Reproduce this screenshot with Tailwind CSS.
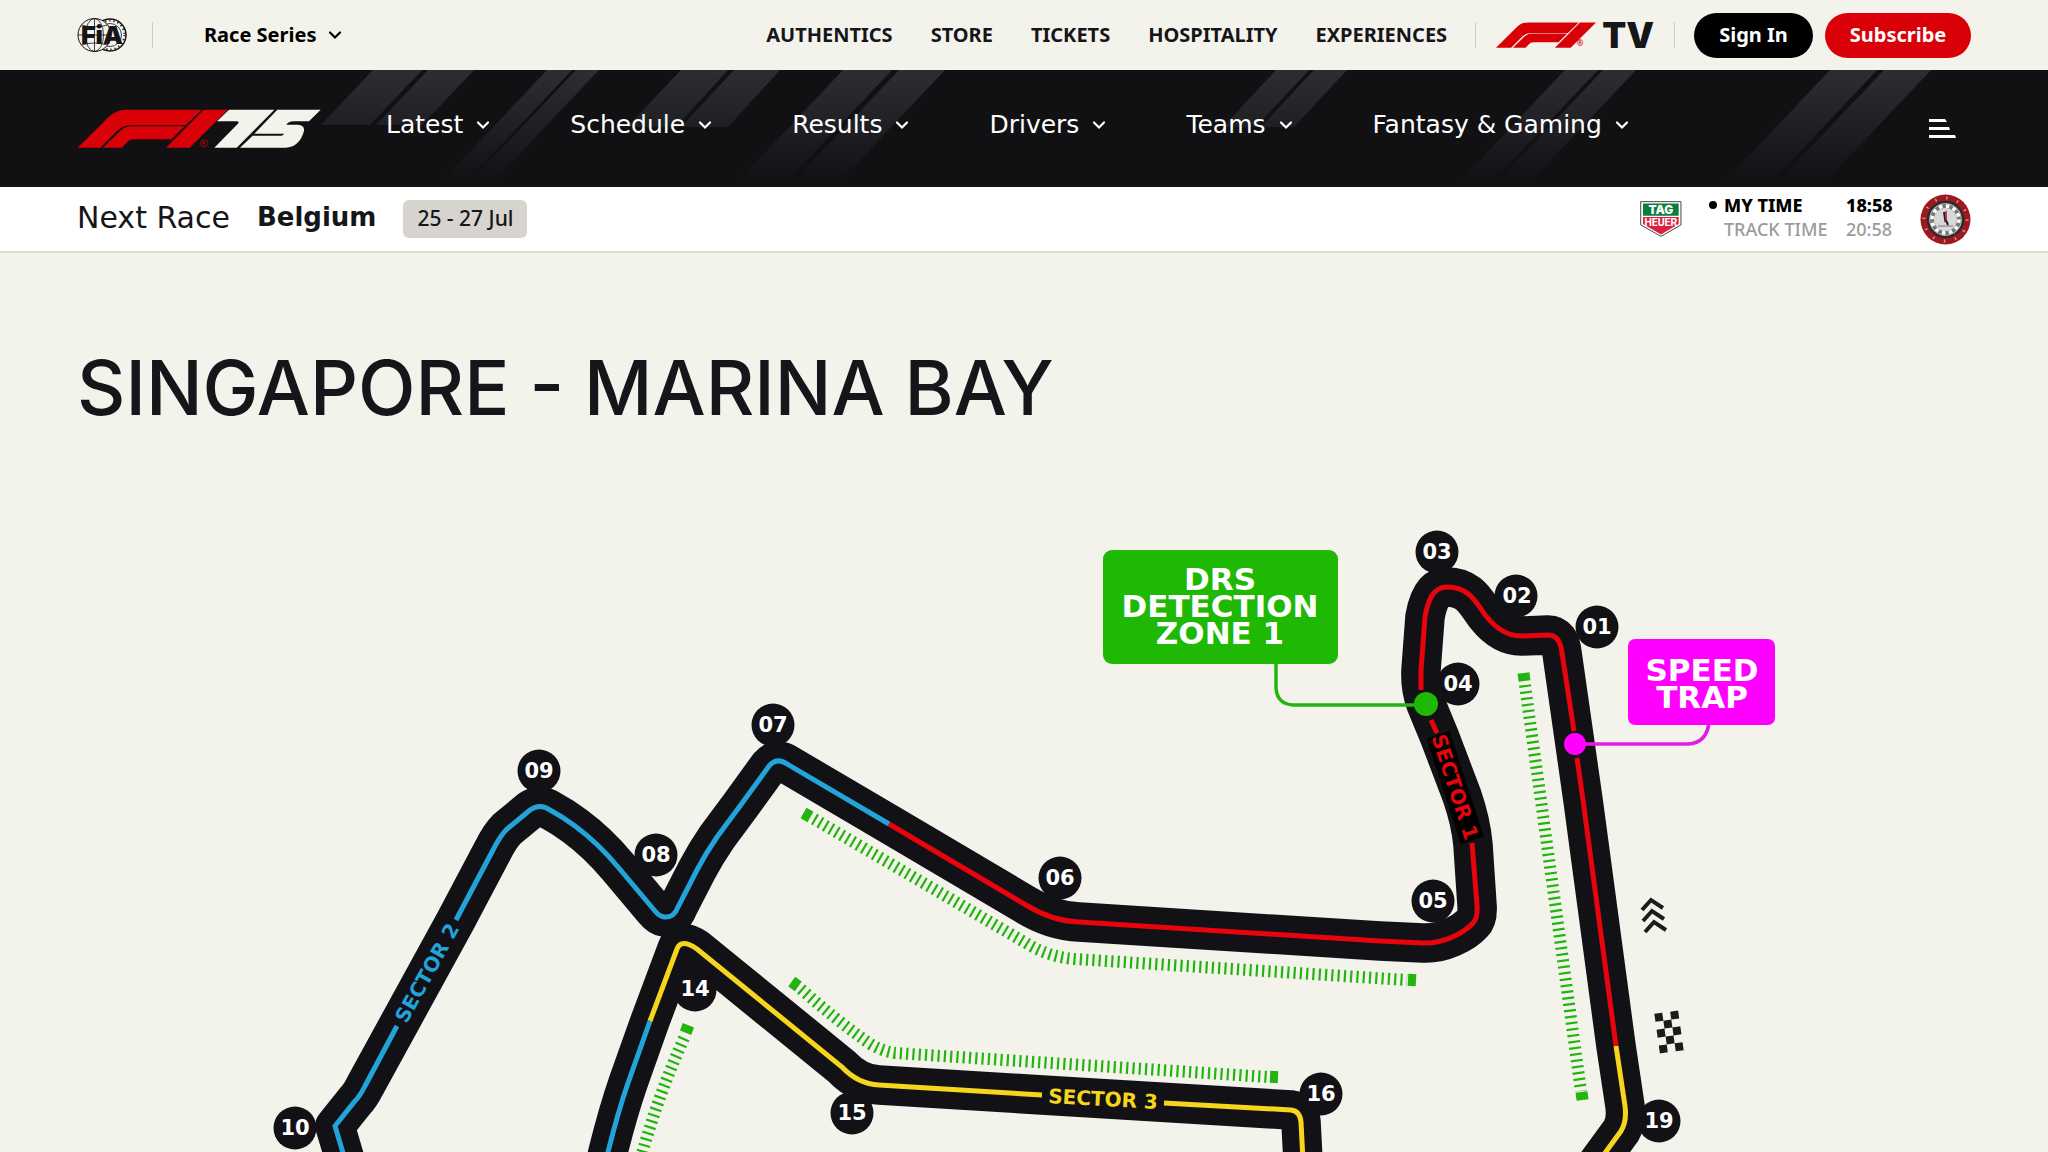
<!DOCTYPE html>
<html lang="en">
<head>
<meta charset="utf-8">
<title>Singapore - Marina Bay</title>
<script src="https://cdn.jsdelivr.net/npm/@tailwindcss/browser@4"></script>
</head>
<body class="bg-[#f3f3eb] text-[#15151a] font-['Noto_Sans',sans-serif] overflow-x-hidden">

<!-- Shared symbols -->
<svg class="hidden" aria-hidden="true">
  <symbol id="f1" viewBox="54 326 450 115">
    <path d="M54 441 L146 350 Q168 327 200 327 H426 L378 374 H215 Q190 374 175 388 L122 441Z"/>
    <path d="M130 441 L182 390 Q196 377 215 377 H375 L335 416 H224 Q210 416 201 426 L187 441Z"/>
    <path d="M432 327 H504 L390 441 H319Z"/>
  </symbol>
  <symbol id="chev" viewBox="0 0 14 14">
    <path d="M2 4.500 L7 9.500 L12 4.500" fill="none" stroke="currentColor" stroke-width="2.200" stroke-linecap="round"/>
  </symbol>
</svg>

<!-- Utility bar -->
<div class="flex h-[70px] items-center px-[77px] text-[20px] font-bold whitespace-nowrap">
  <a href="#" aria-label="FIA">
    <svg class="block h-9 w-[50px]" viewBox="0 0 50 36">
      <g fill="none" stroke="#15151a" stroke-width="1">
        <circle cx="33" cy="18" r="16" stroke-width="1.500"/>
        <circle cx="33" cy="18" r="14.500" stroke-width="2" stroke-dasharray="1.200 3"/>
        <circle cx="33" cy="18" r="11.500" stroke-width="0.800"/>
        <circle cx="17.500" cy="18" r="16.500" fill="#f3f3eb"/>
        <ellipse cx="17.500" cy="18" rx="9" ry="16.500" stroke-width="0.800"/>
        <path d="M17.500 1.500 V34.500 M1 18 H34 M4.500 8 Q17 12 30.500 8 M4.500 28 Q17 24 30.500 28" stroke-width="0.800"/>
      </g>
      <text x="4" y="27" font-family="Inter" font-weight="900" font-size="25" fill="#15151a">FiA</text>
    </svg>
  </a>
  <span class="ml-[25px] h-[26px] w-px bg-[#cfcfc9]"></span>
  <button class="ml-[51px] flex items-center gap-3 text-black">Race Series
    <svg class="size-[14px]"><use href="#chev"/></svg>
  </button>
  <nav class="ml-auto flex items-center gap-[38px]">
    <a href="#">AUTHENTICS</a>
    <a href="#">STORE</a>
    <a href="#">TICKETS</a>
    <a href="#">HOSPITALITY</a>
    <a href="#">EXPERIENCES</a>
  </nav>
  <span class="ml-7 h-[26px] w-px bg-[#cfcfc9]"></span>
  <a href="#" class="ml-5 flex items-center">
    <svg class="h-[26px] w-[100px] fill-[#d90007]"><use href="#f1"/></svg>
    <span class="-ml-[22px] mt-4 w-3 text-center text-[8px] leading-none text-[#d90007]">®</span>
    <span class="ml-4 font-[Inter] text-[35px] leading-none font-black">TV</span>
  </a>
  <span class="ml-5 h-[26px] w-px bg-[#cfcfc9]"></span>
  <button class="ml-[19px] h-[45px] w-[119px] rounded-full bg-black text-white">Sign In</button>
  <button class="ml-3 h-[45px] w-[146px] rounded-full bg-[#d90007] text-white">Subscribe</button>
</div>

<!-- Main navigation -->
<header class="relative h-[117px] bg-[#111114] text-white">
  <svg class="absolute inset-0 h-full w-full" viewBox="0 0 2048 117" preserveAspectRatio="xMidYMid slice" aria-hidden="true">
    <defs>
      <linearGradient id="fade" gradientUnits="userSpaceOnUse" x1="0" y1="0" x2="0" y2="112">
        <stop offset="0" stop-color="#2d2e31"/><stop offset="0.500" stop-color="#202024"/><stop offset="1" stop-color="#111114"/>
      </linearGradient>
    </defs>
    <g fill="url(#fade)">
      <path d="M373 0H422L370 55H321Z M428 0H474L422 55H376Z"/>
      <path d="M547 0H572L468 110H443Z M576 0H599L495 110H472Z"/>
      <path d="M681 0H728L676 57H627Z M734 0H780L728 57H681Z"/>
      <path d="M843 0H892L788 110H739Z M899 0H945L841 110H795Z"/>
      <path d="M1276 0H1309L1256 57H1223Z M1314 0H1347L1294 57H1261Z"/>
      <path d="M1565 0H1598L1494 110H1461Z M1603 0H1636L1532 110H1499Z"/>
      <path d="M1830 0H1877L1773 110H1726Z M1884 0H1931L1827 110H1780Z"/>
    </g>
  </svg>
  <div class="relative flex h-full items-center px-[77px]">
    <a href="#" aria-label="F1 75">
      <svg class="block h-[39px] w-[244px]" viewBox="52 325 732 117">
        <g fill="#d90007">
          <path d="M54 441 L146 350 Q168 327 200 327 H426 L378 374 H215 Q190 374 175 388 L122 441Z"/>
          <path d="M130 441 L182 390 Q196 377 215 377 H375 L335 416 H224 Q210 416 201 426 L187 441Z"/>
          <path d="M432 327 H504 L390 441 H319Z"/>
        </g>
        <circle cx="434" cy="428" r="11" fill="none" stroke="#d90007" stroke-width="2"/>
        <path d="M431 434V422H435Q438 425 435 428H431M435 428L438 434" fill="none" stroke="#d90007" stroke-width="2"/>
        <g fill="#f3f3eb">
          <path d="M508 327H644L531 441H464L534 370Q541 362 530 362H472Z"/>
          <path d="M653 327H783L748 362H702Q688 362 680 372H715Q735 374 733 390Q728 412 712 428Q698 441 678 441H541L579 405H660Q671 405 673 399H584Z"/>
        </g>
      </svg>
    </a>
    <nav class="ml-[65px] flex gap-20 pb-2 font-['DejaVu_Sans',sans-serif] text-[25px] whitespace-nowrap">
      <button class="flex items-center gap-[13px]">Latest<svg class="size-[14px]"><use href="#chev"/></svg></button>
      <button class="flex items-center gap-[13px]">Schedule<svg class="size-[14px]"><use href="#chev"/></svg></button>
      <button class="flex items-center gap-[13px]">Results<svg class="size-[14px]"><use href="#chev"/></svg></button>
      <button class="flex items-center gap-[13px]">Drivers<svg class="size-[14px]"><use href="#chev"/></svg></button>
      <button class="flex items-center gap-[13px]">Teams<svg class="size-[14px]"><use href="#chev"/></svg></button>
      <button class="flex items-center gap-[13px]">Fantasy &amp; Gaming<svg class="size-[14px]"><use href="#chev"/></svg></button>
    </nav>
    <button class="mr-[14px] ml-auto" aria-label="Menu">
      <svg class="h-5 w-7" viewBox="0 0 28 20" fill="#fff"><path d="M0 0H16L18 3H0ZM0 8H20L21 11H0ZM0 16H26L27 19H0Z"/></svg>
    </button>
  </div>
</header>

<!-- Next race -->
<section class="flex h-[66px] items-center border-b-2 border-[#dcdbd5] bg-white px-[77px] whitespace-nowrap">
  <span class="pb-1 font-['DejaVu_Sans',sans-serif] text-[30px]">Next Race</span>
  <strong class="ml-[27px] pb-1 font-['DejaVu_Sans',sans-serif] text-[26px] font-bold">Belgium</strong>
  <span class="ml-[27px] flex h-[38px] w-[124px] items-center justify-center rounded-md bg-[#d7d4cf] text-[21px] font-medium">25 - 27 Jul</span>
  <svg class="ml-auto h-9 w-[42px]" viewBox="28 38 126 110" aria-label="TAG Heuer">
    <path d="M29 40H152V111L91 146L29 111Z" fill="#fff" stroke="#444" stroke-width="3"/>
    <path d="M36 46H145V83H36Z" fill="#0a7d3e"/>
    <path d="M36 87H145V108L91 140L36 108Z" fill="#dd1f3d"/>
    <text x="90.500" y="78" text-anchor="middle" font-family="Inter" font-weight="900" font-size="36" fill="#fff">TAG</text>
    <text x="90.500" y="115" text-anchor="middle" font-family="Roboto" font-weight="700" font-size="32" fill="#fff">HEUER</text>
  </svg>
  <div class="ml-[27px] grid grid-cols-[15px_122px_46px] items-center pb-1 text-[18px] leading-6">
    <span class="size-2 rounded-full bg-black"></span>
    <span class="font-extrabold text-black">MY TIME</span>
    <span class="font-extrabold text-black">18:58</span>
    <span></span>
    <span class="font-medium text-[#9b9b9b]">TRACK TIME</span>
    <span class="font-medium text-[#9b9b9b]">20:58</span>
  </div>
  <svg class="ml-[28px] size-[51px]" viewBox="0 0 51 51" aria-hidden="true">
    <circle cx="25.500" cy="25.500" r="25" fill="#9c1a1f"/>
    <circle cx="25.500" cy="25.500" r="21.500" fill="none" stroke="#d98a8a" stroke-width="3" stroke-dasharray="1.500 9.760"/>
    <circle cx="25.500" cy="25.500" r="17.500" fill="#d5d5d5" stroke="#2c2c2c" stroke-width="2.500"/>
    <circle cx="25.500" cy="25.500" r="13.500" fill="none" stroke="#777" stroke-width="4"/>
    <circle cx="25.500" cy="25.500" r="13.500" fill="none" stroke="#fff" stroke-width="3.500" stroke-dasharray="3.500 3.568"/>
    <circle cx="25.500" cy="25.500" r="11" fill="#d8d8d8"/>
    <path d="M25.500 28L24 18M25.500 25L28 31" stroke="#222" stroke-width="2"/>
    <path d="M26 27V17" stroke="#c8102e" stroke-width="1.500"/>
    <path d="M18 32H33" stroke="#777" stroke-width="1"/>
  </svg>
</section>

<main class="px-[77px] pt-[95px]">
  <h1 class="font-[Inter] text-[75px] leading-[80px] font-medium whitespace-nowrap">SINGAPORE - MARINA BAY</h1>

  <!-- Circuit map -->
  <svg class="mt-[72px] block w-full" viewBox="77 500 1894 652" role="img" aria-label="Marina Bay circuit map">
    <!-- Tarmac -->
    <g fill="none" stroke="#121216" stroke-width="39.500" stroke-linejoin="round">
      <path d="M1573 1197L1621 1131Q1627 1121 1625 1106L1616 1046L1583 800L1562 653Q1560 635 1548 635L1521 636C1506 636 1494 626 1486 616C1476 603 1470 587 1447 587C1433 587 1428 600 1425 617L1421 670Q1420 688 1426 704L1440 738L1462 796Q1471 822 1473 845L1477 905Q1478 918 1473 923C1464 933 1443 944 1423 943L1380 941L1079 922Q1052 921 1026 905L889 824L787 764Q777 757 769 766L740 806L717 837Q706 853 697 870L678 907Q674 918 664 917Q659 916 655 911L618 867Q598 843 575 826Q563 817 550 810Q540 803 530 810L507 829Q500 836 493 850L456 920L365 1086Q360 1096 355 1101L335 1126L357 1200"/>
      <path d="M596 1205L608 1152Q618 1112 628 1083L650 1021L677 949Q681 938 697 949L740 984L842 1067Q858 1084 879 1085L1042 1095L1291 1110Q1300 1111 1301 1122L1305 1200"/>
    </g>
    <!-- Racing line by sector -->
    <g fill="none" stroke-width="5">
      <path stroke="#e8040c" d="M1616 1046L1583 800L1577 758M1574 731L1562 653Q1560 635 1548 635L1521 636C1506 636 1494 626 1486 616C1476 603 1470 587 1447 587C1433 587 1428 600 1425 617L1421 670V690M1431 720L1437 733M1472 843L1477 905Q1478 918 1473 923C1464 933 1443 944 1423 943L1380 941L1079 922Q1052 921 1026 905L889 824"/>
      <g stroke="#23a4d9">
        <path d="M889 824L787 764Q777 757 769 766L740 806L717 837Q706 853 697 870L678 907Q674 918 664 917Q659 916 655 911L618 867Q598 843 575 826Q563 817 550 810Q540 803 530 810L507 829Q500 836 493 850L456 920M397 1026L365 1086Q360 1096 355 1101L335 1126L357 1200"/>
        <path d="M650 1021L628 1083Q618 1112 608 1152L596 1205"/>
      </g>
      <g stroke="#f6d51f">
        <path d="M1616 1046L1625 1106Q1627 1121 1621 1131L1573 1197"/>
        <path d="M650 1021L677 949Q681 938 697 949L740 984L842 1067Q858 1084 879 1085L1042 1095M1164 1103L1291 1110Q1300 1111 1301 1122L1305 1200"/>
      </g>
    </g>
    <!-- DRS zones -->
    <g fill="none" stroke="#22b40f" stroke-width="12" stroke-dasharray="2.200 4.100">
      <path d="M1525 685L1581 1091"/>
      <path d="M814 819L1026 943Q1048 957 1075 959L1407 980"/>
      <path d="M801 989Q835 1019 866 1041Q880 1051 895 1053L1269 1077"/>
      <path d="M684 1038Q658 1096 642 1154"/>
    </g>
    <g fill="#22b40f">
      <path transform="translate(1524 677) rotate(-8)" d="M-6 -4H6V4H-6Z"/>
      <path transform="translate(1582 1096) rotate(-8)" d="M-6 -4H6V4H-6Z"/>
      <path transform="translate(807 815) rotate(30)" d="M-4 -6H4V6H-4Z"/>
      <path transform="translate(1412 980) rotate(3)" d="M-4 -6H4V6H-4Z"/>
      <path transform="translate(795 984) rotate(35)" d="M-4 -6H4V6H-4Z"/>
      <path transform="translate(1274 1077) rotate(3)" d="M-4 -6H4V6H-4Z"/>
      <path transform="translate(687 1029) rotate(21)" d="M-6 -4H6V4H-6Z"/>
    </g>
    <!-- Sector names -->
    <g font-family="DejaVu Sans" font-weight="700" font-size="20" text-anchor="middle">
      <g transform="translate(1455 787) rotate(72)">
        <rect x="-55" y="-12" width="111" height="24" fill="#000"/>
        <text y="7" fill="#e8040c">SECTOR 1</text>
      </g>
      <text transform="translate(427 973) rotate(-61)" y="7" fill="#23a4d9">SECTOR 2</text>
      <text transform="translate(1103 1099) rotate(3)" y="7" fill="#f6d51f">SECTOR 3</text>
    </g>
    <!-- Turn numbers -->
    <g fill="#121216">
      <circle cx="1597" cy="627" r="21.500"/><circle cx="1516" cy="596" r="21.500"/><circle cx="1437" cy="552" r="21.500"/>
      <circle cx="1458" cy="684" r="21.500"/><circle cx="1433" cy="901" r="21.500"/><circle cx="1060" cy="878" r="21.500"/>
      <circle cx="773" cy="725" r="21.500"/><circle cx="656" cy="855" r="21.500"/><circle cx="539" cy="771" r="21.500"/>
      <circle cx="295" cy="1128" r="21.500"/><circle cx="695" cy="990" r="21.500"/><circle cx="852" cy="1113" r="21.500"/>
      <circle cx="1321" cy="1094" r="21.500"/><circle cx="1659" cy="1121" r="21.500"/>
    </g>
    <g fill="#fff" font-family="DejaVu Sans" font-weight="700" font-size="21" text-anchor="middle">
      <text x="1597" y="634">01</text><text x="1517" y="603">02</text><text x="1437" y="559">03</text>
      <text x="1458" y="691">04</text><text x="1433" y="908">05</text><text x="1060" y="885">06</text>
      <text x="773" y="732">07</text><text x="656" y="862">08</text><text x="539" y="778">09</text>
      <text x="295" y="1135">10</text><text x="695" y="996">14</text><text x="852" y="1120">15</text>
      <text x="1321" y="1101">16</text><text x="1659" y="1128">19</text>
    </g>
    <!-- Callouts -->
    <path d="M1276 660V688Q1277 704 1293 705H1426" fill="none" stroke="#22b40f" stroke-width="3.500"/>
    <circle cx="1426" cy="704" r="12" fill="#1fb805"/>
    <rect x="1103" y="550" width="235" height="114" rx="9" fill="#1fb805"/>
    <path d="M1709 722Q1707 743 1688 744H1575" fill="none" stroke="#e41be0" stroke-width="3.500"/>
    <circle cx="1575" cy="744" r="11" fill="#ff00ff"/>
    <rect x="1628" y="639" width="147" height="86" rx="7" fill="#ff00ff"/>
    <g fill="#fff" font-family="DejaVu Sans" font-weight="700" font-size="31" text-anchor="middle">
      <text><tspan x="1220" y="590">DRS</tspan><tspan x="1220" y="617">DETECTION</tspan><tspan x="1220" y="644">ZONE 1</tspan></text>
      <text><tspan x="1702" y="681">SPEED</tspan><tspan x="1702" y="708">TRAP</tspan></text>
    </g>
    <!-- Direction of travel -->
    <g fill="none" stroke="#1b1b1b" stroke-width="4">
      <path d="M1642 910L1651 900L1663 908M1643 921L1652 911L1664 919M1645 932L1654 922L1666 930"/>
    </g>
    <!-- Start/finish flag -->
    <g transform="translate(1669 1032) rotate(-8)" fill="#1b1b1b">
      <path d="M-12 -20h8v8h-8zM4 -20h8v8h-8zM-4 -12h8v8h-8zM-12 -4h8v8h-8zM4 -4h8v8h-8zM-4 4h8v8h-8zM-12 12h8v8h-8zM4 12h8v8h-8z"/>
    </g>
  </svg>
</main>
</body>
</html>
